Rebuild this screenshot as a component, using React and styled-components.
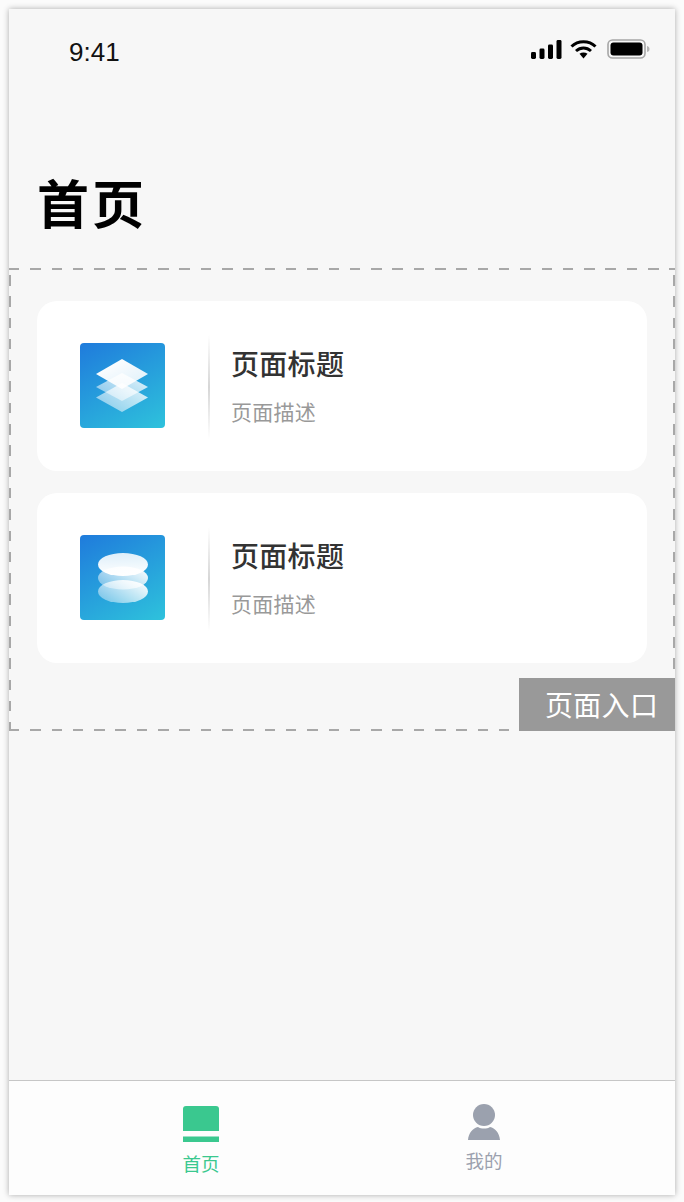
import React from 'react';
import styled, { createGlobalStyle } from 'styled-components';

const GlobalStyle = createGlobalStyle`
  html, body {
    margin: 0;
    padding: 0;
    background: #fbfbfb;
    font-family: "Liberation Sans", "Noto Sans CJK SC", sans-serif;
  }
`;

const Page = styled.div`
  width: 684px;
  height: 1202px;
  padding: 9px 9px 7px;
  box-sizing: border-box;
  overflow: hidden;
`;

const Phone = styled.div`
  width: 666px;
  height: 1186px;
  background: #f7f7f7;
  box-shadow: 0 0 6px rgba(0, 0, 0, 0.32);
  display: flex;
  flex-direction: column;
`;

const StatusBar = styled.div`
  height: 80px;
  padding: 26px 25px 0 60px;
  box-sizing: border-box;
  display: flex;
  justify-content: space-between;
  align-items: flex-start;
`;

const Clock = styled.div`
  font-size: 26px;
  line-height: 34px;
  color: #111;
`;

const StatusIcons = styled.div`
  display: flex;
  align-items: center;
  gap: 8px;
  margin-top: 4px;

  svg:last-child {
    margin-left: 2px;
  }
`;

const Header = styled.div`
  height: 179px;
  padding: 77px 0 0 28px;
  box-sizing: border-box;
`;

const PageTitle = styled.h1`
  margin: 0;
  font-size: 52px;
  line-height: 72px;
  font-weight: 700;
  letter-spacing: 3px;
  color: #000;
  font-family: "Noto Sans CJK SC", sans-serif;
`;

const dash = '#a8a8a8';

const Entry = styled.section`
  position: relative;
  height: 463px;
  box-sizing: border-box;
  padding: 33px 28px 0;
  display: flex;
  flex-direction: column;
  gap: 22px;
  background-image:
    repeating-linear-gradient(90deg, ${dash} 0 10.5px, transparent 10.5px 21.3px),
    repeating-linear-gradient(90deg, ${dash} 0 10.5px, transparent 10.5px 21.3px),
    repeating-linear-gradient(180deg, ${dash} 0 10.5px, transparent 10.5px 21.3px),
    repeating-linear-gradient(180deg, ${dash} 0 10.5px, transparent 10.5px 21.3px);
  background-size: 100% 2px, 100% 2px, 2px 100%, 2px 100%;
  background-position: 0 0, 0 100%, 0 7px, 100% 7px;
  background-repeat: no-repeat;
`;

const Card = styled.div`
  height: 170px;
  box-sizing: border-box;
  background: #fff;
  border-radius: 20px;
  display: flex;
  align-items: center;
  padding: 0 0 1px 43px;
`;

const IconTile = styled.div`
  width: 85px;
  height: 85px;
  flex: none;
  border-radius: 4px;
  background: linear-gradient(150deg, #1f7bdc 0%, #2ec2dc 100%);
  display: flex;
  align-items: center;
  justify-content: center;
`;

const Divider = styled.div`
  width: 2px;
  height: 104px;
  margin: 3px 21px 0 43px;
  flex: none;
  background: linear-gradient(180deg, rgba(210, 210, 210, 0), #d6d6d6 50%, rgba(210, 210, 210, 0));
`;

const CardText = styled.div`
  display: flex;
  flex-direction: column;
  gap: 15px;
  font-family: "Noto Sans CJK SC", sans-serif;
`;

const CardTitle = styled.div`
  font-size: 28px;
  line-height: 36px;
  font-weight: 500;
  letter-spacing: 0.3px;
  color: #333;
`;

const CardDesc = styled.div`
  font-size: 21px;
  line-height: 30px;
  letter-spacing: 0.25px;
  color: #999;
`;

const EntryBadge = styled.div`
  position: absolute;
  right: 0;
  bottom: 0;
  width: 156px;
  height: 53px;
  background: #999;
  color: #fff;
  font-size: 28px;
  line-height: 53px;
  letter-spacing: 0.3px;
  padding-left: 26px;
  box-sizing: border-box;
  font-family: "Noto Sans CJK SC", sans-serif;
`;

const Spacer = styled.div`
  flex: 1;
`;

const TabBar = styled.nav`
  height: 115px;
  flex: none;
  box-sizing: border-box;
  background: #fdfdfd;
  border-top: 1px solid #c6c6c6;
  display: grid;
  grid-template-columns: 284px 282px;
  padding-left: 50px;
`;

const Tab = styled.div`
  display: flex;
  flex-direction: column;
  align-items: center;
  padding-top: ${props => (props.$active ? 25 : 23)}px;
  box-sizing: border-box;
`;

const TabLabel = styled.div`
  margin-top: ${props => (props.$active ? 8 : 7)}px;
  font-size: 18.5px;
  line-height: 26px;
  color: ${props => (props.$active ? '#3ac88f' : '#9ba1ae')};
  font-family: "Noto Sans CJK SC", sans-serif;
`;

const SignalIcon = () => (
  <svg width="31" height="19" viewBox="0 0 31 19">
    <rect x="0" y="12" width="5" height="7" rx="1.4" fill="#000" />
    <rect x="8.5" y="8.5" width="5" height="10.5" rx="1.4" fill="#000" />
    <rect x="17" y="4.5" width="5" height="14.5" rx="1.4" fill="#000" />
    <rect x="25.5" y="0" width="5" height="19" rx="1.4" fill="#000" />
  </svg>
);

const WifiIcon = () => (
  <svg width="27" height="20" viewBox="0 0 27 20" fill="none" stroke="#000" strokeWidth="3">
    <path d="M1.5 7.5C8 1 19 1 25.5 7.5" />
    <path d="M6 12C10.5 8 16.5 8 21 12" />
    <path d="M9.5 14.8L13.5 19.5L17.5 14.8C15 13 12 13 9.5 14.8Z" fill="#000" stroke="none" />
  </svg>
);

const BatteryIcon = () => (
  <svg width="43" height="20" viewBox="0 0 43 20">
    <rect x="1" y="1" width="37" height="18" rx="4.5" fill="none" stroke="#a6a6a6" strokeWidth="1.6" />
    <rect x="3.5" y="3.5" width="32" height="13" rx="3" fill="#000" />
    <path d="M40 7C42 7.5 42.5 8.5 42.5 10C42.5 11.5 42 12.5 40 13Z" fill="#b5b5b5" />
  </svg>
);

const LayersIcon = () => (
  <svg width="53" height="53" viewBox="0 0 53 53">
    <defs>
      <linearGradient id="sheetTop" x1="0.2" y1="0.1" x2="0.9" y2="0.9">
        <stop offset="0" stopColor="#fff" />
        <stop offset="1" stopColor="#fff" stopOpacity="0.85" />
      </linearGradient>
      <linearGradient id="sheetLow" x1="0" y1="1" x2="1" y2="0">
        <stop offset="0" stopColor="#fff" stopOpacity="0.4" />
        <stop offset="1" stopColor="#fff" stopOpacity="0.9" />
      </linearGradient>
    </defs>
    <path d="M26 24L52 38.5L26 53L0 38.5Z" fill="url(#sheetLow)" />
    <path d="M26 14L52 28L26 42L0 28Z" fill="url(#sheetLow)" />
    <path d="M26 0L52 15L26 30L0 15Z" fill="url(#sheetTop)" />
  </svg>
);

const DiscsIcon = () => (
  <svg width="50" height="50" viewBox="0 0 50 50">
    <defs>
      <linearGradient id="discTop" x1="0" y1="1" x2="0" y2="0">
        <stop offset="0" stopColor="#fff" />
        <stop offset="1" stopColor="#fff" stopOpacity="0.85" />
      </linearGradient>
      <linearGradient id="discLow" x1="0" y1="0.9" x2="1" y2="0.1">
        <stop offset="0" stopColor="#fff" stopOpacity="0.35" />
        <stop offset="1" stopColor="#fff" stopOpacity="1" />
      </linearGradient>
    </defs>
    <ellipse cx="25" cy="38.5" rx="25" ry="11.5" fill="url(#discLow)" />
    <ellipse cx="25" cy="25" rx="25" ry="11.5" fill="url(#discLow)" />
    <ellipse cx="25" cy="11.5" rx="25" ry="11.5" fill="url(#discTop)" />
  </svg>
);

const BookIcon = () => (
  <svg width="36" height="36" viewBox="0 0 36 36" fill="#3ac88f">
    <path d="M0 25V3Q0 0 3 0H33Q36 0 36 3V25Z" />
    <rect x="0" y="30.5" width="36" height="5.5" />
  </svg>
);

const PersonIcon = () => (
  <svg width="32" height="36" viewBox="0 0 32 36" fill="#9ba1ae">
    <circle cx="16" cy="11" r="11" />
    <path d="M0 36C0.5 29 5 24 10 23C13 25 19 25 22 23C27 24 31.5 29 32 36Z" />
  </svg>
);

const pages = [
  { id: 1, icon: <LayersIcon /> },
  { id: 2, icon: <DiscsIcon /> },
];

const App = () => (
  <Page>
    <GlobalStyle />
    <Phone>
      <StatusBar>
        <Clock>9:41</Clock>
        <StatusIcons>
          <SignalIcon />
          <WifiIcon />
          <BatteryIcon />
        </StatusIcons>
      </StatusBar>
      <Header>
        <PageTitle>首页</PageTitle>
      </Header>
      <Entry>
        {pages.map(page => (
          <Card key={page.id}>
            <IconTile>{page.icon}</IconTile>
            <Divider />
            <CardText>
              <CardTitle>页面标题</CardTitle>
              <CardDesc>页面描述</CardDesc>
            </CardText>
          </Card>
        ))}
        <EntryBadge>页面入口</EntryBadge>
      </Entry>
      <Spacer />
      <TabBar>
        <Tab $active>
          <BookIcon />
          <TabLabel $active>首页</TabLabel>
        </Tab>
        <Tab>
          <PersonIcon />
          <TabLabel>我的</TabLabel>
        </Tab>
      </TabBar>
    </Phone>
  </Page>
);

export default App;
